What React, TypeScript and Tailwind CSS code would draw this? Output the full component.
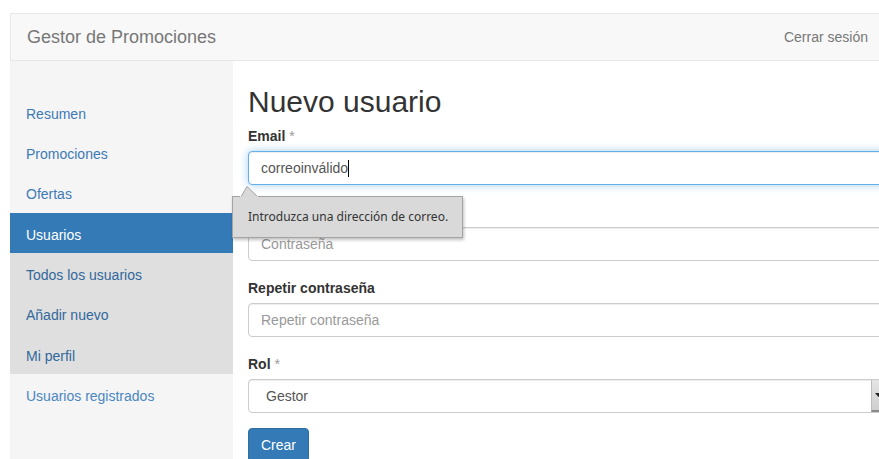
const sideLinks = ['Resumen', 'Promociones', 'Ofertas'];
const subLinks = ['Todos los usuarios', 'Añadir nuevo', 'Mi perfil'];

function Label({ text, required }: { text: string; required?: boolean }) {
  return (
    <label className="block h-[20px] leading-[20px] text-[14px] font-bold text-[#333] mb-[5px]">
      {text}
      {required && <span className="font-normal text-[#999]"> *</span>}
    </label>
  );
}

function TextInput({ placeholder }: { placeholder: string }) {
  return (
    <div className="w-[648px] h-[34px] rounded-[4px] border border-[#ccc] bg-white px-[12px] flex items-center text-[14px] text-[#999] shadow-[inset_0_1px_1px_rgba(0,0,0,0.075)]">
      {placeholder}
    </div>
  );
}

export default function App() {
  return (
    <div className="w-[879px] h-[459px] overflow-hidden bg-white pt-[13px] pl-[10px] font-['Liberation_Sans',Arial,sans-serif] flex flex-col">
      {/* top navbar */}
      <nav className="h-[48px] shrink-0 flex items-center justify-between bg-[#f8f8f8] border-t border-l border-b border-[#e7e7e7] pl-[16px] pr-[11px]">
        <span className="text-[18px] text-[#777]">Gestor de Promociones</span>
        <span className="text-[14px] text-[#777]">Cerrar sesión</span>
      </nav>

      <div className="flex flex-1 min-h-0">
        {/* sidebar */}
        <aside className="w-[223px] shrink-0 bg-[#f5f5f5] pt-[30.5px] text-[14px]">
          {sideLinks.map((l) => (
            <div key={l} className="h-[40.4px] pl-[16px] pt-[12px] leading-[20px] text-[#3d7ab5]">
              {l}
            </div>
          ))}
          <div className="h-[40.4px] pl-[16px] pt-[12px] leading-[20px] bg-[#337ab7] text-white">Usuarios</div>
          <div className="bg-[#dfdfdf]">
            {subLinks.map((l) => (
              <div key={l} className="h-[40.4px] pl-[16px] pt-[12px] leading-[20px] text-[#31689c]">
                {l}
              </div>
            ))}
          </div>
          <div className="h-[40.4px] pl-[16px] pt-[12px] leading-[20px] text-[#4a87c0]">Usuarios registrados</div>
        </aside>

        {/* main form */}
        <main className="relative flex-1 pl-[15px] pt-[24px]">
          <h2 className="text-[30px] leading-[33px] text-[#333] mb-[8px]">Nuevo usuario</h2>

          <div className="mb-[17px]">
            <Label text="Email" required />
            <div className="w-[648px] h-[34px] rounded-[4px] border border-[#66afe9] bg-white px-[12px] flex items-center text-[14px] text-[#555] shadow-[inset_0_1px_1px_rgba(0,0,0,0.075),0_0_8px_rgba(102,175,233,0.6)]">
              correoinválido
              <span className="inline-block w-px h-[17px] bg-black" />
            </div>
          </div>

          <div className="mb-[17px]">
            <Label text="Contraseña" required />
            <TextInput placeholder="Contraseña" />
          </div>

          <div className="mb-[17px]">
            <Label text="Repetir contraseña" />
            <TextInput placeholder="Repetir contraseña" />
          </div>

          <div className="mb-[15px]">
            <Label text="Rol" required />
            <div className="w-[648px] h-[34px] rounded-[4px] border border-[#ccc] bg-white flex items-stretch text-[14px] text-[#555] shadow-[inset_0_1px_1px_rgba(0,0,0,0.075)]">
              <span className="flex-1 flex items-center pl-[17px]">Gestor</span>
              <div className="w-[24px] bg-gradient-to-b from-[#e4e4e4] to-[#cfcfcf] border-l border-[#bdbdbd] border-b-2 border-b-[#8a8a8a] flex items-center pl-[3px]">
                <svg width="7" height="4" viewBox="0 0 7 4">
                  <path d="M0 0h7L3.5 4z" fill="#222" />
                </svg>
              </div>
            </div>
          </div>

          <button className="h-[34px] px-[12px] rounded-[4px] bg-[#337ab7] border border-[#2e6da4] text-white text-[14px]">
            Crear
          </button>

          {/* validation bubble */}
          <svg className="absolute left-[7px] top-[125px]" width="19" height="12" viewBox="0 0 19 12">
            <polygon points="0.5,11.5 7,0.5 18.5,11.5" fill="#d9d9d9" stroke="#a3a3a3" strokeWidth="1" />
          </svg>
          <div className="absolute left-[-1px] top-[135px] w-[231px] h-[42px] bg-[#d9d9d9] border border-[#a3a3a3] border-t-0 shadow-[1px_2px_3px_rgba(0,0,0,0.25)] flex items-center pl-[15px] font-['Noto_Sans',sans-serif] text-[12px] text-[#333]">
            Introduzca una dirección de correo.
          </div>
          <div className="absolute left-[-1px] top-[135px] w-[8px] h-px bg-[#a3a3a3]" />
          <div className="absolute left-[25px] top-[135px] w-[205px] h-px bg-[#a3a3a3]" />
        </main>
      </div>
    </div>
  );
}
